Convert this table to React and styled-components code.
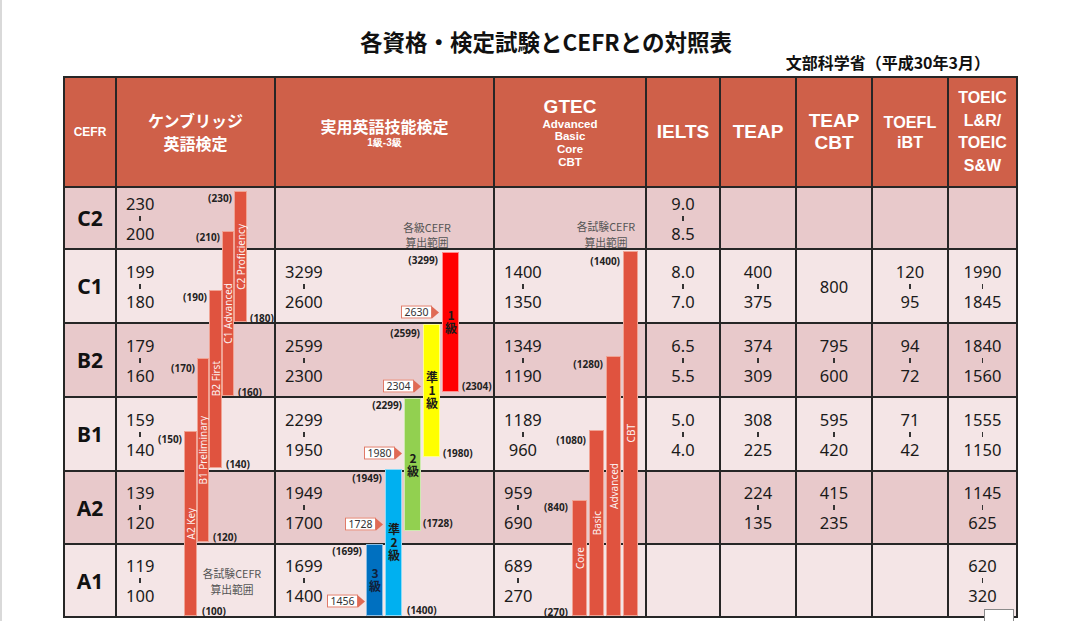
import React from "react";
import styled, { createGlobalStyle } from "styled-components";

const OX = 63;
const OY = 76;
const COLS = [52, 159, 219, 152, 74, 76, 76, 76, 69];
const ROWH = [62, 74, 74, 74, 73, 73];
const LINE = "#262626";

const GlobalStyle = createGlobalStyle`
  html, body { margin: 0; padding: 0; background: #fff; }
  body { font-family: "Noto Sans", "Noto Sans CJK JP", sans-serif; color: #1a1a1a; }
`;

const Page = styled.div`
  position: relative;
  width: 1087px;
  height: 621px;
  overflow: hidden;
  box-shadow: inset 2px 0 0 #d9d9d9;
`;

const Heading = styled.header`
  width: 955px;
  margin-left: 63px;
  padding-top: 28px;
  display: flex;
  flex-direction: column;
`;

const Title = styled.h1`
  margin: 0;
  padding-left: 11px;
  text-align: center;
  font: 700 22.5px/26px "Noto Sans CJK JP", sans-serif;
  color: #111;
`;

const Source = styled.div`
  align-self: flex-end;
  margin-right: 28px;
  font: 700 16px/16px "Noto Sans CJK JP", sans-serif;
  color: #111;
`;

const TableWrap = styled.div`
  position: relative;
  margin: 6px 0 0 63px;
  width: 955px;
`;

const Grid = styled.div`
  display: grid;
  grid-template-columns: ${COLS.map((c) => c + "px").join(" ")};
  grid-template-rows: 110px ${ROWH.map((r) => r + "px").join(" ")};
  border-left: 2px solid ${LINE};
  border-top: 2px solid ${LINE};
`;

const HeadCell = styled.div`
  box-sizing: border-box;
  border-right: 2px solid ${LINE};
  border-bottom: 2px solid ${LINE};
  background: #cf6049;
  color: #fff;
  display: flex;
  flex-direction: column;
  align-items: center;
  justify-content: center;
  text-align: center;
`;

const HeadText = styled.span`
  display: block;
  font-family: ${(p) =>
    p.$jp ? '"Noto Sans CJK JP", sans-serif' : '"Liberation Sans", Arial, sans-serif'};
  font-weight: 700;
  font-size: ${(p) => p.$size}px;
  line-height: ${(p) => p.$lh || p.$size + 3}px;
  white-space: nowrap;
`;

const Cell = styled.div`
  box-sizing: border-box;
  border-right: 2px solid ${LINE};
  border-bottom: 2px solid ${LINE};
  background: ${(p) => (p.$dark ? "#e8c9cb" : "#f4e5e6")};
  display: flex;
  align-items: center;
  justify-content: ${(p) => (p.$left ? "flex-start" : "center")};
  padding-left: ${(p) => (p.$left ? "9px" : "0")};
`;

const Level = styled.span`
  font: 700 21px/24px "Noto Sans", sans-serif;
  color: #111;
`;

const Stack = styled.div`
  display: inline-flex;
  flex-direction: column;
  align-items: center;
`;

const Num = styled.span`
  font: 400 16.5px/17px "Noto Sans", sans-serif;
  color: #1a1a1a;
`;

const Tick = styled.span`
  width: 1.6px;
  height: 5px;
  margin: 4px 0;
  background: #333;
`;

const Overlay = styled.div`
  position: absolute;
  inset: 0;
  pointer-events: none;
`;

const Bar = styled.div.attrs((p) => ({
  style: {
    left: p.$x - OX,
    top: p.$y1 - OY,
    width: p.$w,
    height: p.$y2 - p.$y1,
    background: p.$color,
  },
}))`
  position: absolute;
  box-sizing: border-box;
  border: 1px solid ${(p) => p.$edge};
  display: flex;
  flex-direction: column;
  align-items: center;
  justify-content: center;
`;

const BarLabel = styled.span`
  writing-mode: vertical-rl;
  transform: rotate(180deg);
  color: #fff;
  font: 400 10px/1 "Noto Sans", sans-serif;
  white-space: nowrap;
  opacity: 0.92;
`;

const GradeLabel = styled.span`
  writing-mode: vertical-rl;
  text-orientation: upright;
  font: 700 12px/12px "Noto Sans CJK JP", sans-serif;
  letter-spacing: 1px;
  color: ${(p) => p.$ink};
  white-space: nowrap;
`;

const ScoreTag = styled.span.attrs((p) => ({
  style: {
    left: p.$x - OX,
    top: p.$y - OY,
    transform: p.$side === "r" ? "translate(-100%, -50%)" : "translate(0, -50%)",
  },
}))`
  position: absolute;
  font: 700 10px/12px "Noto Sans", sans-serif;
  color: #222;
  white-space: nowrap;
`;

const Pointer = styled.div.attrs((p) => ({
  style: { left: p.$tip - OX, top: p.$y - OY },
}))`
  position: absolute;
  display: flex;
  align-items: center;
  transform: translate(-100%, -50%);
`;

const PointerBox = styled.span`
  box-sizing: border-box;
  width: 31px;
  height: 13px;
  background: #fff;
  border: 1px solid #e07a68;
  font: 400 10.5px/11px "Noto Sans", sans-serif;
  color: #333;
  display: flex;
  align-items: center;
  justify-content: center;
`;

const PointerTip = styled.span`
  width: 0;
  height: 0;
  border-top: 6px solid transparent;
  border-bottom: 6px solid transparent;
  border-left: 7px solid #e06a55;
`;

const Note = styled.div.attrs((p) => ({
  style: { left: p.$cx - OX, top: p.$top - OY },
}))`
  position: absolute;
  transform: translateX(-50%);
  text-align: center;
  font: 400 10.8px/15.7px "Noto Sans CJK JP", sans-serif;
  color: #555;
  white-space: nowrap;
`;

const CornerBox = styled.div`
  position: absolute;
  left: 984px;
  top: 609px;
  width: 30px;
  height: 14px;
  box-sizing: border-box;
  background: #fff;
  border: 1px solid #8a8a8a;
  border-bottom: none;
`;

const ROWS = [
  { level: "C2", dark: true, cam: ["230", "200"], eiken: null, gtec: null, ielts: ["9.0", "8.5"], teap: null, cbt: null, toefl: null, toeic: null },
  { level: "C1", dark: false, cam: ["199", "180"], eiken: ["3299", "2600"], gtec: ["1400", "1350"], ielts: ["8.0", "7.0"], teap: ["400", "375"], cbt: ["800"], toefl: ["120", "95"], toeic: ["1990", "1845"] },
  { level: "B2", dark: true, cam: ["179", "160"], eiken: ["2599", "2300"], gtec: ["1349", "1190"], ielts: ["6.5", "5.5"], teap: ["374", "309"], cbt: ["795", "600"], toefl: ["94", "72"], toeic: ["1840", "1560"] },
  { level: "B1", dark: false, cam: ["159", "140"], eiken: ["2299", "1950"], gtec: ["1189", "960"], ielts: ["5.0", "4.0"], teap: ["308", "225"], cbt: ["595", "420"], toefl: ["71", "42"], toeic: ["1555", "1150"] },
  { level: "A2", dark: true, cam: ["139", "120"], eiken: ["1949", "1700"], gtec: ["959", "690"], ielts: null, teap: ["224", "135"], cbt: ["415", "235"], toefl: null, toeic: ["1145", "625"] },
  { level: "A1", dark: false, cam: ["119", "100"], eiken: ["1699", "1400"], gtec: ["689", "270"], ielts: null, teap: null, cbt: null, toefl: null, toeic: ["620", "320"] },
];

const CAM_BARS = [
  { x: 184, w: 13, y1: 431, y2: 616, label: "A2 Key" },
  { x: 197, w: 12, y1: 358, y2: 542, label: "B1 Preliminary" },
  { x: 209, w: 13, y1: 290, y2: 468, label: "B2 First" },
  { x: 222, w: 12, y1: 231, y2: 396, label: "C1 Advanced" },
  { x: 234, w: 13, y1: 191, y2: 322, label: "C2 Proficiency" },
];

const GTEC_BARS = [
  { x: 572, w: 15, y1: 500, y2: 616, label: "Core" },
  { x: 589, w: 15, y1: 430, y2: 616, label: "Basic" },
  { x: 606, w: 15, y1: 356, y2: 616, label: "Advanced" },
  { x: 623, w: 15, y1: 251, y2: 616, label: "CBT" },
];

const EIKEN_BARS = [
  { x: 442, w: 17, y1: 252, y2: 392, color: "#ff0000", ink: "#1a1a1a", text: "1級" },
  { x: 423, w: 17, y1: 324, y2: 457, color: "#ffff00", ink: "#1a1a1a", text: "準1級" },
  { x: 404, w: 17, y1: 398, y2: 531, color: "#92d050", ink: "#1a1a1a", text: "2級" },
  { x: 385, w: 17, y1: 469, y2: 616, color: "#00b0f0", ink: "#1a1a1a", text: "準2級" },
  { x: 366, w: 17, y1: 544, y2: 616, color: "#0070c0", ink: "#10203a", text: "3級" },
];

const TAGS = [
  ["(230)", 232, 198, "r"], ["(180)", 250, 318, "l"], ["(210)", 220, 237, "r"], ["(160)", 238, 392, "l"],
  ["(190)", 207, 297, "r"], ["(140)", 226, 464, "l"], ["(170)", 195, 368, "r"], ["(120)", 213, 537, "l"],
  ["(150)", 182, 439, "r"], ["(100)", 202, 611, "l"],
  ["(3299)", 438, 260, "r"], ["(2304)", 462, 386, "l"], ["(2599)", 420, 333, "r"], ["(1980)", 443, 453, "l"],
  ["(2299)", 402, 405, "r"], ["(1728)", 423, 523, "l"], ["(1949)", 382, 478, "r"], ["(1400)", 407, 610, "l"],
  ["(1699)", 362, 551, "r"],
  ["(1400)", 620, 261, "r"], ["(1280)", 603, 364, "r"], ["(1080)", 586, 440, "r"], ["(840)", 568, 507, "r"],
  ["(270)", 568, 612, "r"],
];

const POINTERS = [
  { t: "2630", tip: 439, y: 312 },
  { t: "2304", tip: 421, y: 386 },
  { t: "1980", tip: 402, y: 453 },
  { t: "1728", tip: 383, y: 524 },
  { t: "1456", tip: 365, y: 601 },
];

const NOTES = [
  { a: "各試験CEFR", cx: 232, top: 566 },
  { a: "各級CEFR", cx: 427, top: 219.5 },
  { a: "各試験CEFR", cx: 606, top: 219 },
];

function Range({ v }) {
  if (!v) return null;
  if (v.length === 1) return <Num>{v[0]}</Num>;
  return (
    <Stack>
      <Num>{v[0]}</Num>
      <Tick />
      <Num>{v[1]}</Num>
    </Stack>
  );
}

export default function App() {
  return (
    <Page>
      <GlobalStyle />
      <Heading>
        <Title>各資格・検定試験とCEFRとの対照表</Title>
        <Source>文部科学省（平成30年3月）</Source>
      </Heading>
      <TableWrap>
        <Grid>
          <HeadCell>
            <HeadText $size={12}>CEFR</HeadText>
          </HeadCell>
          <HeadCell>
            <HeadText $jp $size={16} $lh={23}>ケンブリッジ</HeadText>
            <HeadText $jp $size={16} $lh={23}>英語検定</HeadText>
          </HeadCell>
          <HeadCell>
            <HeadText $jp $size={16} $lh={21}>実用英語技能検定</HeadText>
            <HeadText $size={10} $lh={12}>1級-3級</HeadText>
          </HeadCell>
          <HeadCell>
            <HeadText $size={19} $lh={22}>GTEC</HeadText>
            <HeadText $size={11.5} $lh={12.6}>Advanced</HeadText>
            <HeadText $size={11.5} $lh={12.6}>Basic</HeadText>
            <HeadText $size={11.5} $lh={12.6}>Core</HeadText>
            <HeadText $size={11.5} $lh={12.6}>CBT</HeadText>
          </HeadCell>
          <HeadCell>
            <HeadText $size={19}>IELTS</HeadText>
          </HeadCell>
          <HeadCell>
            <HeadText $size={19}>TEAP</HeadText>
          </HeadCell>
          <HeadCell>
            <HeadText $size={19} $lh={22}>TEAP</HeadText>
            <HeadText $size={19} $lh={22}>CBT</HeadText>
          </HeadCell>
          <HeadCell>
            <HeadText $size={16.2} $lh={20}>TOEFL</HeadText>
            <HeadText $size={16.2} $lh={20}>iBT</HeadText>
          </HeadCell>
          <HeadCell>
            <HeadText $size={16} $lh={22.5}>TOEIC</HeadText>
            <HeadText $size={16} $lh={22.5}>L&amp;R/</HeadText>
            <HeadText $size={16} $lh={22.5}>TOEIC</HeadText>
            <HeadText $size={16} $lh={22.5}>S&amp;W</HeadText>
          </HeadCell>

          {ROWS.map((r) => (
            <React.Fragment key={r.level}>
              <Cell $dark={r.dark}>
                <Level>{r.level}</Level>
              </Cell>
              <Cell $dark={r.dark} $left>
                <Range v={r.cam} />
              </Cell>
              <Cell $dark={r.dark} $left>
                <Range v={r.eiken} />
              </Cell>
              <Cell $dark={r.dark} $left>
                <Range v={r.gtec} />
              </Cell>
              <Cell $dark={r.dark}>
                <Range v={r.ielts} />
              </Cell>
              <Cell $dark={r.dark}>
                <Range v={r.teap} />
              </Cell>
              <Cell $dark={r.dark}>
                <Range v={r.cbt} />
              </Cell>
              <Cell $dark={r.dark}>
                <Range v={r.toefl} />
              </Cell>
              <Cell $dark={r.dark}>
                <Range v={r.toeic} />
              </Cell>
            </React.Fragment>
          ))}
        </Grid>

        <Overlay>
          {CAM_BARS.concat(GTEC_BARS).map((b) => (
            <Bar key={b.label} $x={b.x} $w={b.w} $y1={b.y1} $y2={b.y2} $color="#e0533f" $edge="#f0a394">
              <BarLabel>{b.label}</BarLabel>
            </Bar>
          ))}
          {EIKEN_BARS.map((b) => (
            <Bar key={b.x} $x={b.x} $w={b.w} $y1={b.y1} $y2={b.y2} $color={b.color} $edge="rgba(255,255,255,0.55)">
              <GradeLabel $ink={b.ink}>{b.text}</GradeLabel>
            </Bar>
          ))}
          {TAGS.map(([t, x, y, s], i) => (
            <ScoreTag key={i} $x={x} $y={y} $side={s}>{t}</ScoreTag>
          ))}
          {POINTERS.map((p) => (
            <Pointer key={p.t} $tip={p.tip} $y={p.y}>
              <PointerBox>{p.t}</PointerBox>
              <PointerTip />
            </Pointer>
          ))}
          {NOTES.map((n, i) => (
            <Note key={i} $cx={n.cx} $top={n.top}>
              {n.a}
              <br />
              算出範囲
            </Note>
          ))}
        </Overlay>
      </TableWrap>
      <CornerBox />
    </Page>
  );
}
